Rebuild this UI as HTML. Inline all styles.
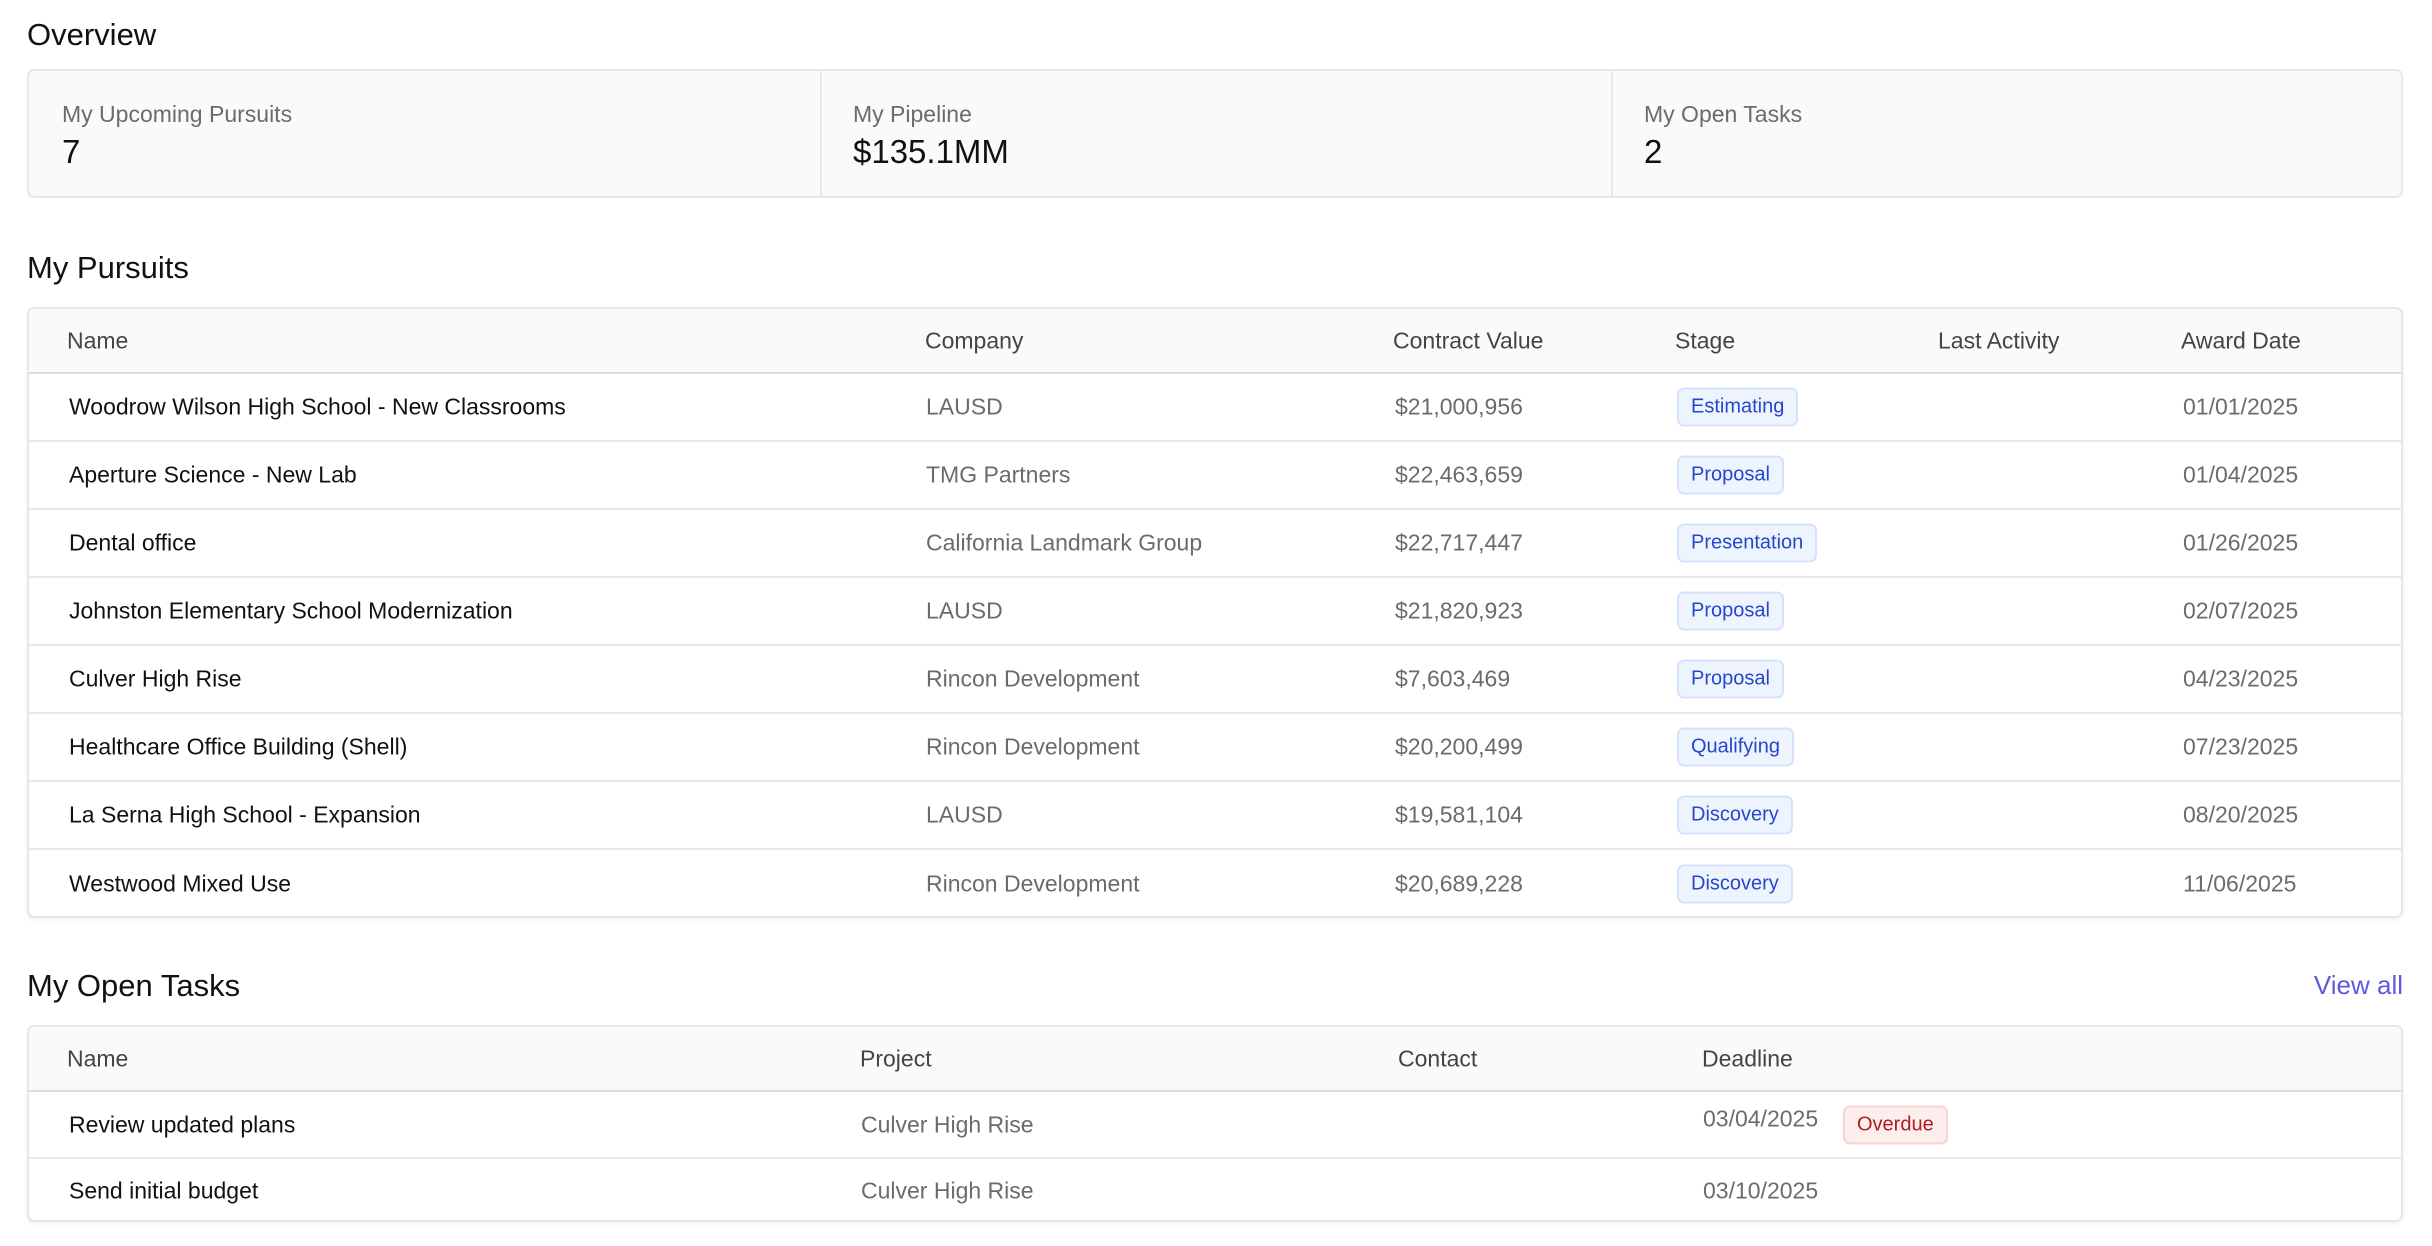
<!DOCTYPE html>
<html><head><meta charset="utf-8"><style>
*{box-sizing:border-box;margin:0;padding:0}
body{width:2432px;height:1246px;background:#fff;font-family:"Liberation Sans",sans-serif;position:relative;overflow:hidden;color:#111}
.abs{position:absolute;white-space:nowrap}
h2{position:absolute;font-size:31px;font-weight:400;color:#111;left:27px}
.card{position:absolute;left:27px;top:69px;width:2376px;height:129px;background:#fafafa;border:2px solid #e8e8e8;border-radius:7px}
.card .col{position:absolute;top:0;height:100%;border-left:2px solid #e8e8e8}
.lbl{font-size:23px;color:#6b6b6b}
.val{font-size:33px;color:#111}
.tbl{position:absolute;left:27px;width:2376px;border:2px solid #e6e6e6;border-radius:7px;overflow:hidden;background:#fff;box-shadow:0 2px 4px rgba(0,0,0,.05)}
.hdr{position:relative;height:65px;background:#fafafa;border-bottom:2px solid #dcdcdc}
.row{position:relative;height:68px;border-bottom:2px solid #e8e8e8}
.row:last-child{border-bottom:none}
.c{position:absolute;top:50%;transform:translateY(-50%);white-space:nowrap;font-size:23px;color:#6b6b6b}
.hdr .c{color:#444;font-weight:500}
.n{color:#111!important}
.b{font-size:20px;color:#2547c9;background:#eef4fe;border:2px solid #d6e2fb;border-radius:7px;padding:6px 12px;font-weight:500}
.od{font-size:20px;color:#b41c1c;background:#fdeeee;border:2px solid #f8d3d3;border-radius:7px;padding:6px 12px}
</style></head><body>
<h2 style="top:17px">Overview</h2>
<div class="card">
 <div class="abs lbl" style="left:33px;top:30px">My Upcoming Pursuits</div>
 <div class="abs val" style="left:33px;top:62px">7</div>
 <div class="col" style="left:791px"></div>
 <div class="abs lbl" style="left:824px;top:30px">My Pipeline</div>
 <div class="abs val" style="left:824px;top:62px">$135.1MM</div>
 <div class="col" style="left:1582px"></div>
 <div class="abs lbl" style="left:1615px;top:30px">My Open Tasks</div>
 <div class="abs val" style="left:1615px;top:62px">2</div>
</div>
<h2 style="top:250px">My Pursuits</h2>
<div class="tbl" style="top:307px;height:611px">
 <div class="hdr"><span class="c" style="left:38px">Name</span><span class="c" style="left:896px">Company</span><span class="c" style="left:1364px">Contract Value</span><span class="c" style="left:1646px">Stage</span><span class="c" style="left:1909px">Last Activity</span><span class="c" style="left:2152px">Award Date</span></div>
 <div class="row"><span class="c n" style="left:40px">Woodrow Wilson High School - New Classrooms</span><span class="c" style="left:897px">LAUSD</span><span class="c" style="left:1366px">$21,000,956</span><span class="c b" style="left:1648px">Estimating</span><span class="c" style="left:2154px">01/01/2025</span></div>
 <div class="row"><span class="c n" style="left:40px">Aperture Science - New Lab</span><span class="c" style="left:897px">TMG Partners</span><span class="c" style="left:1366px">$22,463,659</span><span class="c b" style="left:1648px">Proposal</span><span class="c" style="left:2154px">01/04/2025</span></div>
 <div class="row"><span class="c n" style="left:40px">Dental office</span><span class="c" style="left:897px">California Landmark Group</span><span class="c" style="left:1366px">$22,717,447</span><span class="c b" style="left:1648px">Presentation</span><span class="c" style="left:2154px">01/26/2025</span></div>
 <div class="row"><span class="c n" style="left:40px">Johnston Elementary School Modernization</span><span class="c" style="left:897px">LAUSD</span><span class="c" style="left:1366px">$21,820,923</span><span class="c b" style="left:1648px">Proposal</span><span class="c" style="left:2154px">02/07/2025</span></div>
 <div class="row"><span class="c n" style="left:40px">Culver High Rise</span><span class="c" style="left:897px">Rincon Development</span><span class="c" style="left:1366px">$7,603,469</span><span class="c b" style="left:1648px">Proposal</span><span class="c" style="left:2154px">04/23/2025</span></div>
 <div class="row"><span class="c n" style="left:40px">Healthcare Office Building (Shell)</span><span class="c" style="left:897px">Rincon Development</span><span class="c" style="left:1366px">$20,200,499</span><span class="c b" style="left:1648px">Qualifying</span><span class="c" style="left:2154px">07/23/2025</span></div>
 <div class="row"><span class="c n" style="left:40px">La Serna High School - Expansion</span><span class="c" style="left:897px">LAUSD</span><span class="c" style="left:1366px">$19,581,104</span><span class="c b" style="left:1648px">Discovery</span><span class="c" style="left:2154px">08/20/2025</span></div>
 <div class="row"><span class="c n" style="left:40px">Westwood Mixed Use</span><span class="c" style="left:897px">Rincon Development</span><span class="c" style="left:1366px">$20,689,228</span><span class="c b" style="left:1648px">Discovery</span><span class="c" style="left:2154px">11/06/2025</span></div>
</div>
<h2 style="top:968px">My Open Tasks</h2>
<div class="abs" style="right:29px;top:970px;font-size:26px;color:#5b5bdf">View all</div>
<div class="tbl" style="top:1025px;height:197px">
 <div class="hdr"><span class="c" style="left:38px">Name</span><span class="c" style="left:831px">Project</span><span class="c" style="left:1369px">Contact</span><span class="c" style="left:1673px">Deadline</span></div>
 <div class="row" style="height:67px"><span class="c n" style="left:40px">Review updated plans</span><span class="c" style="left:832px">Culver High Rise</span><span class="c" style="left:1674px;top:42%">03/04/2025</span><span class="c od" style="left:1814px">Overdue</span></div>
 <div class="row" style="height:63px"><span class="c n" style="left:40px">Send initial budget</span><span class="c" style="left:832px">Culver High Rise</span><span class="c" style="left:1674px">03/10/2025</span></div>
</div>
</body></html>
